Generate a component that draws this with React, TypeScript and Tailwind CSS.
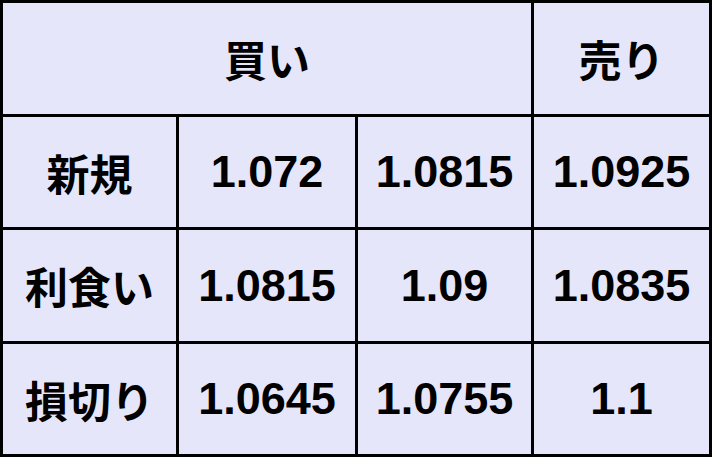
const rows = [
  { label: '新規', values: ['1.072', '1.0815', '1.0925'] },
  { label: '利食い', values: ['1.0815', '1.09', '1.0835'] },
  { label: '損切り', values: ['1.0645', '1.0755', '1.1'] },
]

const jp = "font-['Noto_Sans_CJK_JP',sans-serif] font-bold text-[43px] text-black"
const num = "font-['Liberation_Sans',Arial,sans-serif] font-bold text-[45px] text-black"
const cell = 'bg-[#e6e6fa] flex items-center justify-center'

export default function App() {
  return (
    <div className="w-[712px] h-[457px] bg-black p-[3px] grid grid-cols-[173px_176px_173px_175px] grid-rows-[111px_110px_111px_110px] gap-[3px]">
      <div className={`${cell} col-span-3`}>
        <span className={jp}>買い</span>
      </div>
      <div className={cell}>
        <span className={jp}>売り</span>
      </div>
      {rows.map((row) => (
        <div key={row.label} className="contents">
          <div className={cell}>
            <span className={jp}>{row.label}</span>
          </div>
          {row.values.map((v, i) => (
            <div key={i} className={cell}>
              <span className={num}>{v}</span>
            </div>
          ))}
        </div>
      ))}
    </div>
  )
}
